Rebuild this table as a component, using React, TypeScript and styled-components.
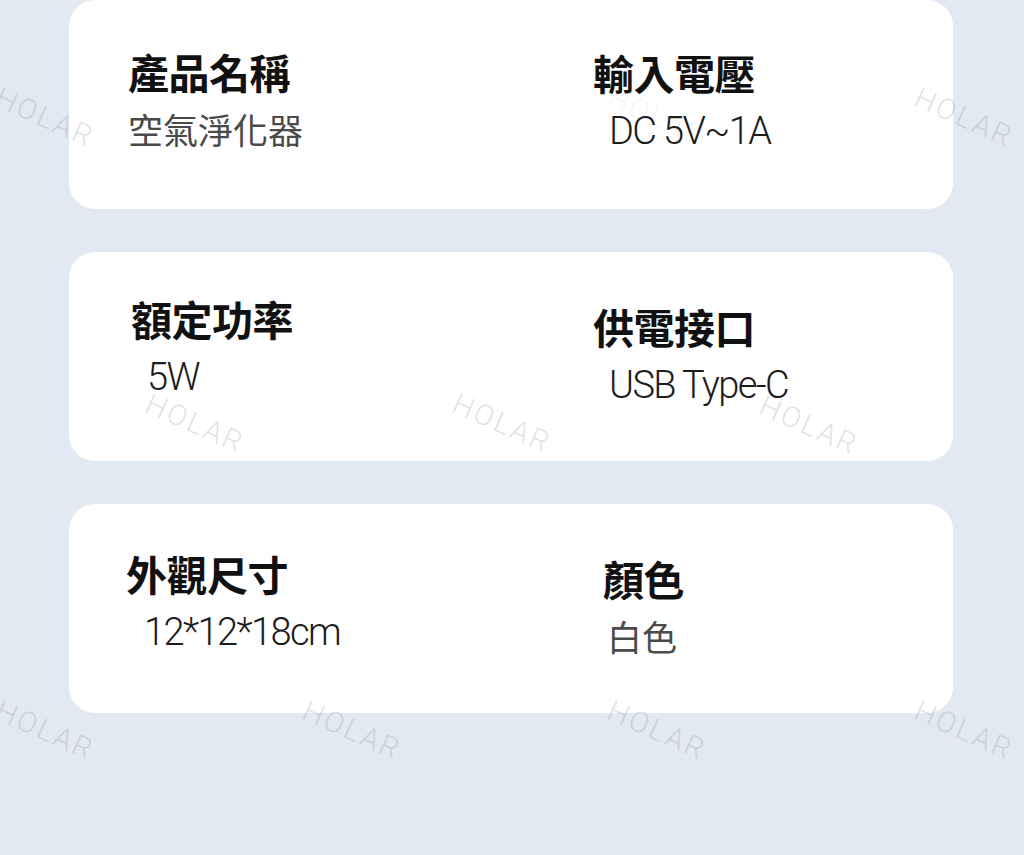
import styled, { createGlobalStyle } from "styled-components";

const GlobalStyle = createGlobalStyle`
  html, body {
    margin: 0;
    padding: 0;
    background: #e2e9f3;
  }
  * {
    box-sizing: border-box;
  }
`;

const Page = styled.div`
  position: relative;
  width: 1024px;
  height: 855px;
  overflow: hidden;
  padding: 0 71px 0 69px;
  display: flex;
  flex-direction: column;
  gap: 43px;
  background: #e2e9f3;
  font-family: "Noto Sans CJK TC", "Noto Sans", sans-serif;
`;

const Card = styled.div`
  height: 209px;
  background: #ffffff;
  border-radius: 26px;
  padding: 51px 0 0 59px;
  display: grid;
  grid-template-columns: 465px 1fr;
  align-items: start;
`;

const Field = styled.div<{ $dx: number; $dy: number }>`
  display: flex;
  flex-direction: column;
  align-items: flex-start;
  margin-left: ${(p) => p.$dx}px;
  margin-top: ${(p) => p.$dy}px;
`;

const Label = styled.div`
  font-family: "Noto Sans CJK TC", sans-serif;
  font-weight: 700;
  font-size: 41px;
  line-height: 1;
  color: #111111;
  letter-spacing: -0.5px;
`;

const Value = styled.div<{ $latin?: boolean; $indent?: number }>`
  margin-top: 19px;
  margin-left: ${(p) => p.$indent || 0}px;
  line-height: 1;
  white-space: nowrap;
  font-family: ${(p) =>
    p.$latin ? `Roboto, "Noto Sans", sans-serif` : `"Noto Sans CJK TC", sans-serif`};
  font-weight: ${(p) => (p.$latin ? 300 : 400)};
  font-size: ${(p) => (p.$latin ? "38px" : "35px")};
  letter-spacing: ${(p) => (p.$latin ? "-1.6px" : "0")};
  color: ${(p) => (p.$latin ? "#1c1c1c" : "#4a4a4a")};
`;

// the faint "HOLAR" stamps lie over the cards
const Watermark = styled.span<{ $faint?: boolean }>`
  position: absolute;
  font-family: Roboto, "Noto Sans", sans-serif;
  font-weight: 300;
  font-size: 29px;
  letter-spacing: 2.5px;
  line-height: 1;
  color: rgba(110, 118, 130, ${(p) => (p.$faint ? 0.08 : 0.22)});
  transform: rotate(24deg);
  transform-origin: 0 0;
  pointer-events: none;
  user-select: none;
`;

type Spec = {
  label: string;
  value: string;
  latin?: boolean;
  indent?: number;
  dx: number;
  dy: number;
};

const rows: Spec[][] = [
  [
    { label: "產品名稱", value: "空氣淨化器", dx: 0, dy: 0 },
    { label: "輸入電壓", value: "DC 5V~1A", latin: true, indent: 16, dx: 0, dy: 1 },
  ],
  [
    { label: "額定功率", value: "5W", latin: true, indent: 16, dx: 3, dy: -5 },
    { label: "供電接口", value: "USB Type-C", latin: true, indent: 16, dx: 0, dy: 3 },
  ],
  [
    { label: "外觀尺寸", value: "12*12*18cm", latin: true, indent: 18, dx: -2, dy: -2 },
    { label: "顏色", value: "白色", indent: 4, dx: 10, dy: 3 },
  ],
];

const marks: { x: number; y: number; faint?: boolean }[] = [
  { x: 3, y: 83 },
  { x: 615, y: 83, faint: true },
  { x: 922, y: 83 },
  { x: 153, y: 389 },
  { x: 460, y: 389 },
  { x: 767, y: 391 },
  { x: 3, y: 696 },
  { x: 310, y: 696 },
  { x: 615, y: 696 },
  { x: 922, y: 696 },
];

export default function App() {
  return (
    <>
      <GlobalStyle />
      <Page>
        {rows.map((row, i) => (
          <Card key={i}>
            {row.map((f) => (
              <Field key={f.label} $dx={f.dx} $dy={f.dy}>
                <Label>{f.label}</Label>
                <Value $latin={f.latin} $indent={f.indent}>
                  {f.value}
                </Value>
              </Field>
            ))}
          </Card>
        ))}
        {marks.map((m, i) => (
          <Watermark key={i} $faint={m.faint} style={{ left: m.x, top: m.y }}>
            HOLAR
          </Watermark>
        ))}
      </Page>
    </>
  );
}
